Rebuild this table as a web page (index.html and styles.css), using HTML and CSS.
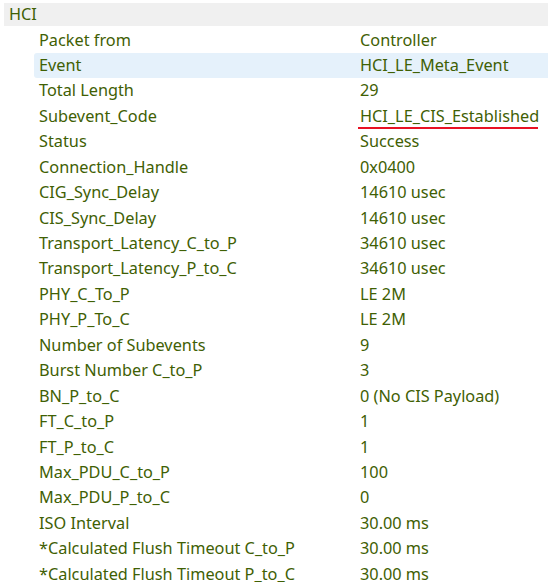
FILE: index.html
```html
<!DOCTYPE html>
<html>
<head>
<meta charset="utf-8">
<link rel="stylesheet" href="styles.css">
</head>
<body>
<div class="tree">
  <div class="group">HCI</div>
  <div class="rows">
    <div class="row"><span class="k">Packet from</span><span class="v">Controller</span></div>
    <div class="row sel"><span class="k">Event</span><span class="v">HCI_LE_Meta_Event</span></div>
    <div class="row"><span class="k">Total Length</span><span class="v">29</span></div>
    <div class="row"><span class="k">Subevent_Code</span><span class="v"><span class="mark">HCI_LE_CIS_Established</span></span></div>
    <div class="row"><span class="k">Status</span><span class="v">Success</span></div>
    <div class="row"><span class="k">Connection_Handle</span><span class="v">0x0400</span></div>
    <div class="row"><span class="k">CIG_Sync_Delay</span><span class="v">14610 usec</span></div>
    <div class="row"><span class="k">CIS_Sync_Delay</span><span class="v">14610 usec</span></div>
    <div class="row"><span class="k">Transport_Latency_C_to_P</span><span class="v">34610 usec</span></div>
    <div class="row"><span class="k">Transport_Latency_P_to_C</span><span class="v">34610 usec</span></div>
    <div class="row"><span class="k">PHY_C_To_P</span><span class="v">LE 2M</span></div>
    <div class="row"><span class="k">PHY_P_To_C</span><span class="v">LE 2M</span></div>
    <div class="row"><span class="k">Number of Subevents</span><span class="v">9</span></div>
    <div class="row"><span class="k">Burst Number C_to_P</span><span class="v">3</span></div>
    <div class="row"><span class="k">BN_P_to_C</span><span class="v">0 (No CIS Payload)</span></div>
    <div class="row"><span class="k">FT_C_to_P</span><span class="v">1</span></div>
    <div class="row"><span class="k">FT_P_to_C</span><span class="v">1</span></div>
    <div class="row"><span class="k">Max_PDU_C_to_P</span><span class="v">100</span></div>
    <div class="row"><span class="k">Max_PDU_P_to_C</span><span class="v">0</span></div>
    <div class="row"><span class="k">ISO Interval</span><span class="v">30.00 ms</span></div>
    <div class="row"><span class="k">*Calculated Flush Timeout C_to_P</span><span class="v">30.00 ms</span></div>
    <div class="row"><span class="k">*Calculated Flush Timeout P_to_C</span><span class="v">30.00 ms</span></div>
  </div>
</div>
</body>
</html>
```

FILE: styles.css
```css
html, body {
  margin: 0;
  padding: 0;
  background: #ffffff;
  overflow: hidden;
}
.tree {
  padding-top: 3px;
  font-family: "Noto Sans", "Open Sans", sans-serif;
  font-size: 16.3px;
  color: #3f6004;
}
.group {
  margin-left: 4px;
  height: 23px;
  line-height: 23px;
  padding-left: 5px;
  background: #f0f0f0;
}
.rows {
  padding-top: 1.5px;
  margin-left: 34px;
}
.row {
  display: grid;
  grid-template-columns: 321px 1fr;
  height: 25.45px;
  line-height: 25.45px;
  padding-left: 5px;
  white-space: nowrap;
}
.row.sel {
  background: #e5f1fb;
  border-radius: 3px 0 0 3px;
}
.mark {
  position: relative;
  display: inline-block;
}
.mark::after {
  content: "";
  position: absolute;
  left: -2px;
  right: 1px;
  top: 23px;
  height: 2px;
  background: #e81123;
}
```
